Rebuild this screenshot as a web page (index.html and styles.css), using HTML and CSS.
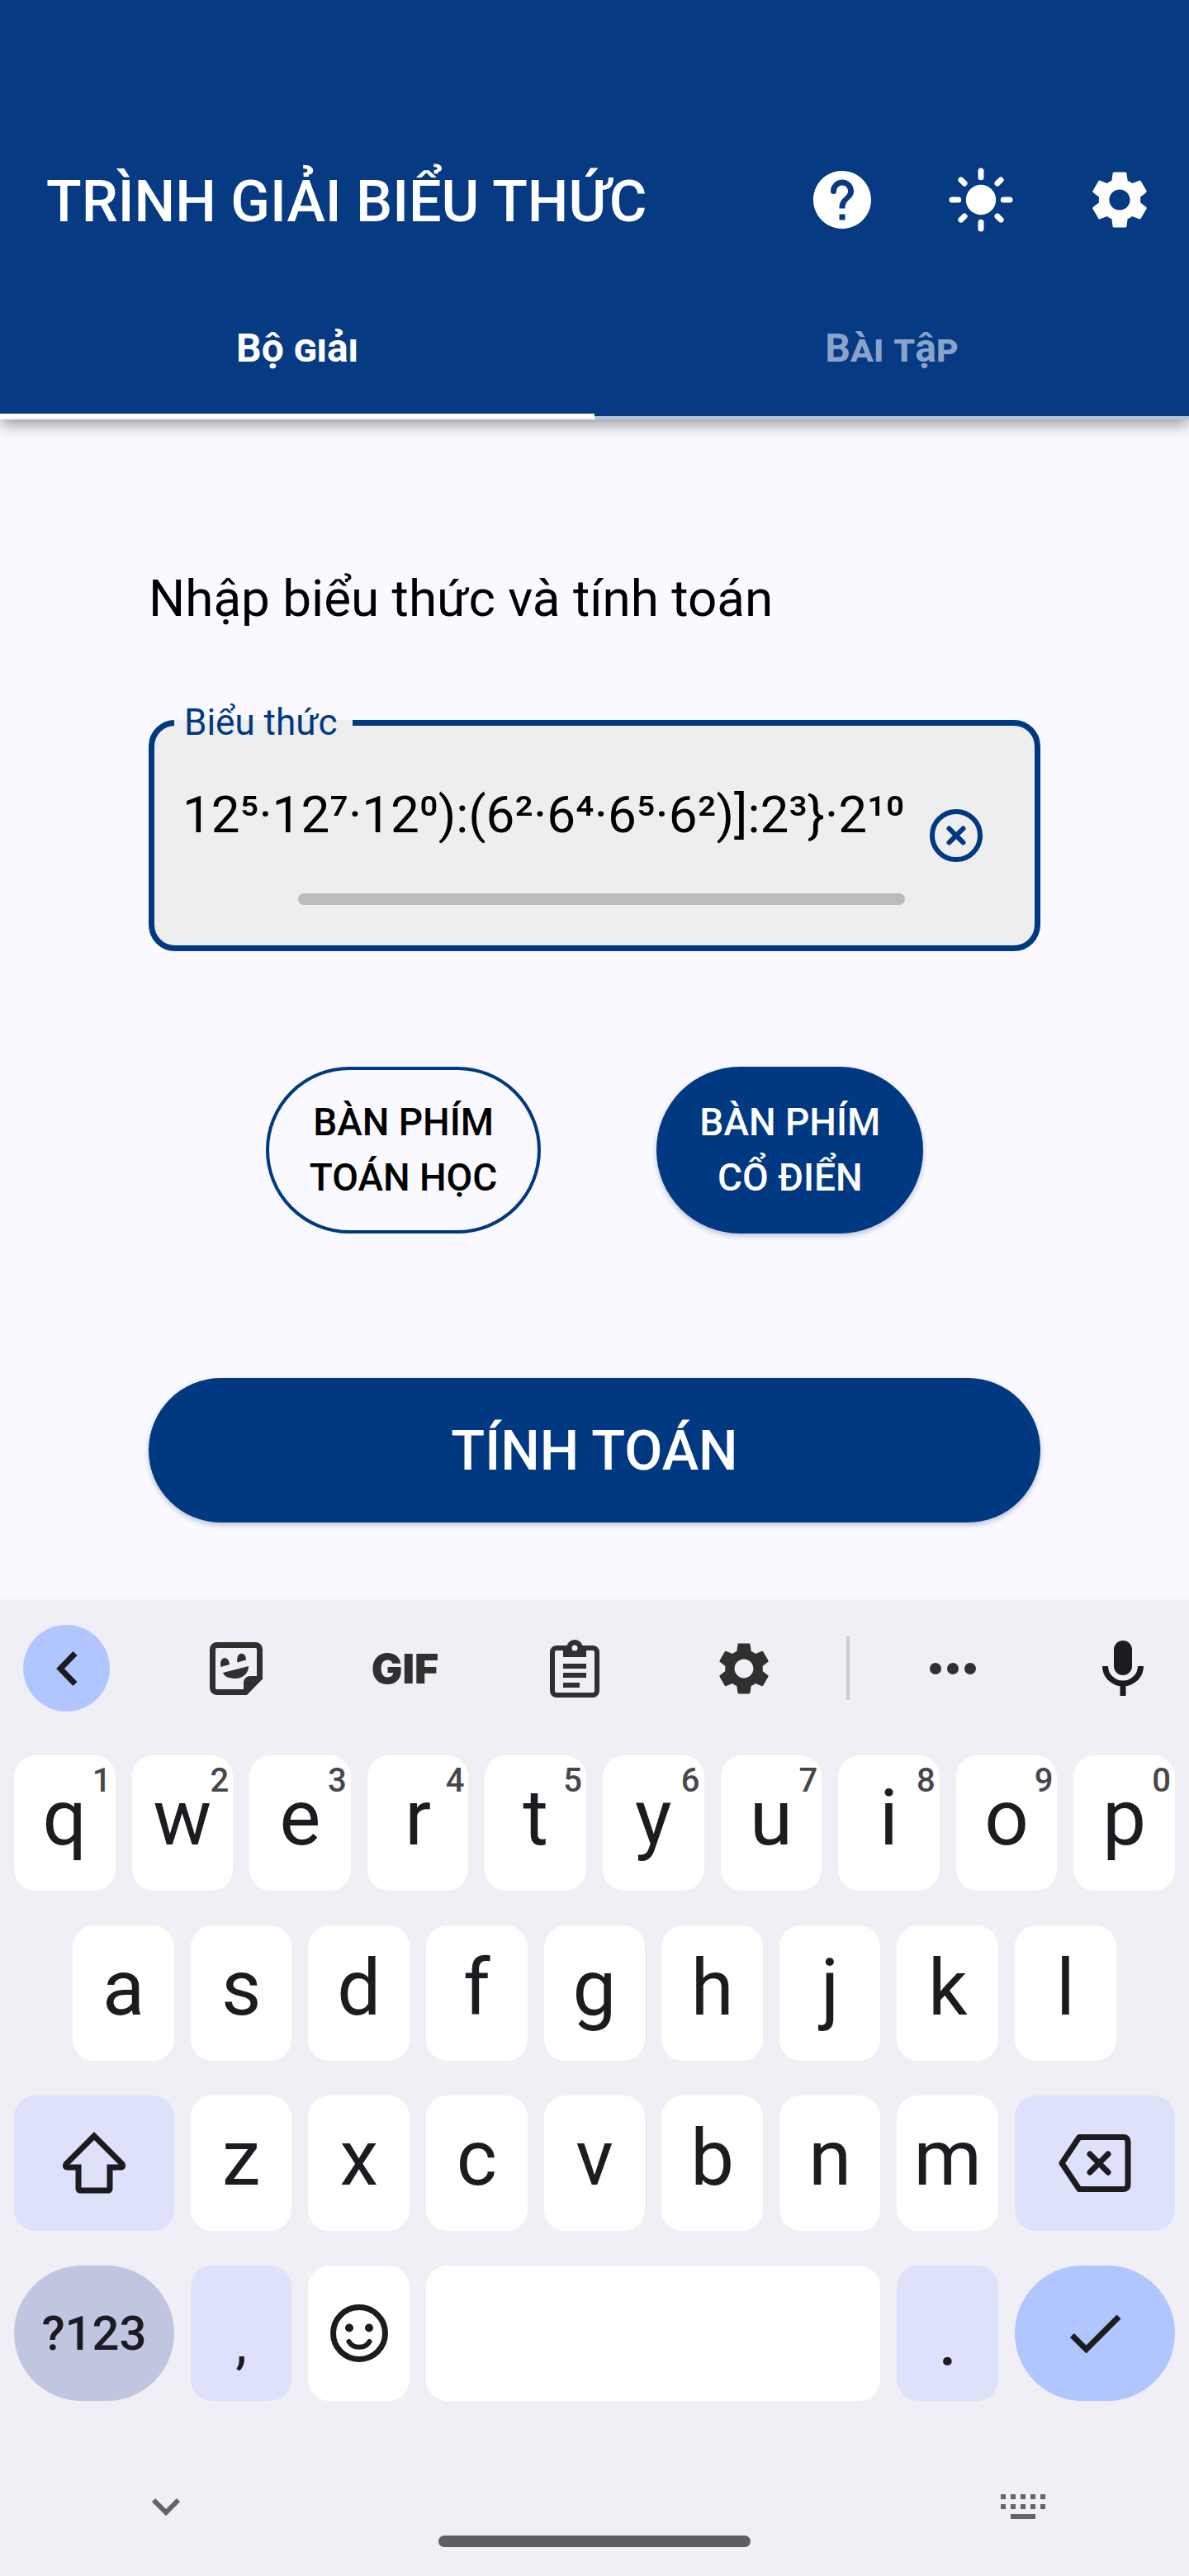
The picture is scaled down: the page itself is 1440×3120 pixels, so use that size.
FILE: index.html
```html
<!DOCTYPE html>
<html lang="vi">
<head>
  <meta charset="UTF-8" />
  <meta name="viewport" content="width=device-width, initial-scale=1.0" />
  <title>Trình giải biểu thức</title>
  <link rel="stylesheet" href="styles.css">
</head>
<body>

  <!-- App bar -->
  <header class="app-header">
    <div class="app-bar">
      <h1>TRÌNH GIẢI BIỂU THỨC</h1>
      <button class="bar-btn" aria-label="Trợ giúp">
        <svg width="84" height="84" viewBox="0 0 24 24"><path fill="#fff" d="M12 2C6.48 2 2 6.48 2 12s4.48 10 10 10 10-4.48 10-10S17.52 2 12 2zm1 17h-2v-2h2v2zm2.07-7.75l-.9.92C13.45 12.9 13 13.5 13 15h-2v-.5c0-1.1.45-2.1 1.17-2.83l1.24-1.26c.37-.36.59-.86.59-1.41 0-1.1-.9-2-2-2s-2 .9-2 2H8c0-2.21 1.79-4 4-4s4 1.79 4 4c0 .88-.36 1.68-.93 2.25z"/><circle cx="9" cy="9" r="1" fill="#063a82"/></svg>
      </button>
      <button class="bar-btn" aria-label="Giao diện">
        <svg width="84" height="84" viewBox="0 0 24 24"><circle cx="12" cy="12" r="5.2" fill="#fff"/><path stroke="#fff" stroke-width="2" stroke-linecap="round" d="M12 2v2.2M12 19.8V22M2 12h2.2M19.8 12H22M5.1 5.1l1.2 1.2M17.7 17.7l1.2 1.2M5.1 18.9l1.2-1.2M17.7 6.3l1.2-1.2"/></svg>
      </button>
      <button class="bar-btn" aria-label="Cài đặt">
        <svg width="84" height="84" viewBox="0 0 24 24"><path fill="#fff" d="M19.14 12.94c.04-.3.06-.61.06-.94 0-.32-.02-.64-.07-.94l2.03-1.58c.18-.14.23-.41.12-.61l-1.92-3.32c-.12-.22-.37-.29-.59-.22l-2.39.96c-.5-.38-1.03-.7-1.62-.94l-.36-2.54c-.04-.24-.24-.41-.48-.41h-3.84c-.24 0-.43.17-.47.41l-.36 2.54c-.59.24-1.13.57-1.62.94l-2.39-.96c-.22-.08-.47 0-.59.22L2.74 8.87c-.12.21-.08.47.12.61l2.03 1.58c-.05.3-.09.63-.09.94s.02.64.07.94l-2.03 1.58c-.18.14-.23.41-.12.61l1.92 3.32c.12.22.37.29.59.22l2.39-.96c.5.38 1.03.7 1.62.94l.36 2.54c.05.24.24.41.48.41h3.84c.24 0 .44-.17.47-.41l.36-2.54c.59-.24 1.13-.56 1.62-.94l2.39.96c.22.08.47 0 .59-.22l1.92-3.32c.12-.22.07-.47-.12-.61l-2.01-1.58zM12 15.6c-1.98 0-3.6-1.62-3.6-3.6s1.62-3.6 3.6-3.6 3.6 1.62 3.6 3.6-1.62 3.6-3.6 3.6z"/></svg>
      </button>
    </div>
    <nav class="tabs">
      <button class="tab active">Bộ giải</button>
      <button class="tab">Bài tập</button>
    </nav>
  </header>

  <!-- Solver form -->
  <main class="solver">
    <h2>Nhập biểu thức và tính toán</h2>
    <fieldset class="field">
      <legend><label for="expression">Biểu thức</label></legend>
      <div class="field-row">
        <div class="field-text">
          <input type="text" id="expression" value="12⁵·12⁷·12⁰):(6²·6⁴·6⁵·6²)]:2³}·2¹⁰">
          <div class="scroll-track"><div class="scroll-thumb"></div></div>
        </div>
        <button class="clear-btn" aria-label="Xóa">
          <svg width="64" height="64" viewBox="0 0 64 64" fill="none" stroke="#003882" stroke-linecap="round"><circle cx="32" cy="32" r="29" stroke-width="6"/><path stroke-width="6" d="M23.500 23.500l17 17M40.500 23.500l-17 17"/></svg>
        </button>
      </div>
    </fieldset>
    <div class="keyboard-choice">
      <button class="pill outline">BÀN PHÍM<br>TOÁN HỌC</button>
      <button class="pill filled">BÀN PHÍM<br>CỔ ĐIỂN</button>
    </div>
    <button class="solve-btn">TÍNH TOÁN</button>
  </main>

  <!-- On-screen keyboard -->
  <section class="keyboard">
    <div class="toolbar">
      <button class="tool back" aria-label="Quay lại">
        <svg width="26" height="42" viewBox="0 0 26 42"><path fill="none" stroke="#1b1b20" stroke-width="7" d="M23 2.500L5 21l18 18.500"/></svg>
      </button>
      <button class="tool" aria-label="Nhãn dán">
        <svg width="66" height="66" viewBox="0 0 66 66"><path fill="none" stroke="#303030" stroke-width="7" d="M9.500 4.500h47a5 5 0 0 1 5 5V44L44.500 61.500h-35a5 5 0 0 1-5-5v-47a5 5 0 0 1 5-5z"/><path fill="#303030" d="M42 62V50a8 8 0 0 1 8-8h13v3L45 63zM17 38l31-8c0 8-6 15-16 15-7 0-13-2-15-7zM14.500 31c-1.500-6 .5-10 4-11 3.500 0 6.500 3 6.500 8zM34.500 25.500c-1-5.500.5-9.500 3.500-10.500 4-1 7 2 7 7.500z"/></svg>
      </button>
      <button class="tool gif">GIF</button>
      <button class="tool" aria-label="Bảng nhớ tạm">
        <svg width="60" height="70" viewBox="0 0 60 70"><rect x="3" y="10" width="54" height="57" rx="5" fill="none" stroke="#303030" stroke-width="6"/><circle cx="30" cy="10" r="10" fill="#303030"/><path fill="#303030" d="M16 8h28v13H16zM16 29h28v6H16zM16 40h28v6H16zM16 52h20v6H16z"/><circle cx="30" cy="10" r="3.500" fill="#f0eff6"/></svg>
      </button>
      <button class="tool" aria-label="Cài đặt bàn phím">
        <svg width="76" height="76" viewBox="0 0 24 24"><path fill="#303030" d="M19.140 12.940c.04-.3.06-.61.06-.94 0-.32-.02-.64-.07-.94l2.030-1.580c.18-.14.23-.41.12-.61l-1.920-3.320c-.12-.22-.37-.29-.59-.22l-2.390.96c-.5-.38-1.030-.7-1.620-.94l-.36-2.540c-.04-.24-.24-.41-.48-.41h-3.840c-.24 0-.43.17-.47.41l-.36 2.540c-.59.24-1.130.57-1.620.94l-2.390-.96c-.22-.08-.47 0-.59.22L2.740 8.870c-.12.21-.08.47.12.61l2.030 1.580c-.05.3-.09.63-.09.94s.02.64.07.94l-2.030 1.580c-.18.14-.23.41-.12.61l1.920 3.320c.12.22.37.29.59.22l2.390-.96c.5.38 1.030.7 1.620.94l.36 2.540c.05.24.24.41.48.41h3.840c.24 0 .44-.17.47-.41l.36-2.540c.59-.24 1.130-.56 1.620-.94l2.390.96c.22.08.47 0 .59-.22l1.920-3.320c.12-.22.07-.47-.12-.61l-2.010-1.580zM12 15.600c-1.980 0-3.600-1.620-3.600-3.600s1.620-3.600 3.600-3.600 3.600 1.620 3.600 3.600-1.620 3.600-3.600 3.600z"/></svg>
      </button>
      <span class="divider"></span>
      <button class="tool" aria-label="Thêm">
        <svg width="56" height="14" viewBox="0 0 56 14" fill="#303030"><circle cx="7" cy="7" r="7"/><circle cx="28" cy="7" r="7"/><circle cx="49" cy="7" r="7"/></svg>
      </button>
      <button class="tool mic" aria-label="Giọng nói">
        <svg width="50" height="68" viewBox="0 0 50 68"><rect x="14" width="22" height="42" rx="11" fill="#1b1b20"/><path fill="none" stroke="#1b1b20" stroke-width="7" d="M3.500 31a21.500 21 0 0 0 43 0M25 52v15"/></svg>
      </button>
    </div>

    <div class="keys">
      <button class="key">q<span class="hint">1</span></button>
      <button class="key">w<span class="hint">2</span></button>
      <button class="key">e<span class="hint">3</span></button>
      <button class="key">r<span class="hint">4</span></button>
      <button class="key">t<span class="hint">5</span></button>
      <button class="key">y<span class="hint">6</span></button>
      <button class="key">u<span class="hint">7</span></button>
      <button class="key">i<span class="hint">8</span></button>
      <button class="key">o<span class="hint">9</span></button>
      <button class="key">p<span class="hint">0</span></button>

      <button class="key indent">a</button>
      <button class="key">s</button>
      <button class="key">d</button>
      <button class="key">f</button>
      <button class="key">g</button>
      <button class="key">h</button>
      <button class="key">j</button>
      <button class="key">k</button>
      <button class="key">l</button>

      <button class="key wide soft row-start" aria-label="Shift">
        <svg width="78" height="76" viewBox="0 0 78 76"><path fill="none" stroke="#1b1b20" stroke-width="7" d="M39 5l34 34q2 4-2 4H58v26a2 2 0 0 1-2 2H22a2 2 0 0 1-2-2V43H7q-4 0-2-4z"/></svg>
      </button>
      <button class="key">z</button>
      <button class="key">x</button>
      <button class="key">c</button>
      <button class="key">v</button>
      <button class="key">b</button>
      <button class="key">n</button>
      <button class="key">m</button>
      <button class="key wide soft" aria-label="Xóa lùi">
        <svg width="88" height="70" viewBox="0 0 88 70"><path fill="none" stroke="#1b1b20" stroke-width="7" stroke-linecap="round" stroke-linejoin="round" d="M25 3.500h54a5 5 0 0 1 5 5v53a5 5 0 0 1-5 5H25L4 35zM38 24l22 22M60 24L38 46"/></svg>
      </button>

      <button class="key wide symbols">?123</button>
      <button class="key soft comma">,</button>
      <button class="key" aria-label="Biểu tượng cảm xúc">
        <svg width="70" height="70" viewBox="0 0 70 70"><g fill="none" stroke="#1b1b20" stroke-width="7"><circle cx="35" cy="35" r="31.500"/><path stroke-width="6" stroke-linecap="round" d="M22.500 45c5 9 20 9 25 0"/></g><circle cx="23" cy="28.500" r="5" fill="#1b1b20"/><circle cx="47" cy="28.500" r="5" fill="#1b1b20"/></svg>
      </button>
      <button class="key space" aria-label="Dấu cách"></button>
      <button class="key soft period">.</button>
      <button class="key wide enter" aria-label="Xong">
        <svg width="84" height="84" viewBox="0 0 24 24"><path fill="#1b1b20" d="M9 16.170L4.830 12l-1.420 1.410L9 19 21 7l-1.410-1.410z"/></svg>
      </button>
    </div>

    <div class="nav-bar">
      <button class="nav-btn" aria-label="Ẩn bàn phím">
        <svg width="34" height="22" viewBox="0 0 34 22"><path fill="none" stroke="#646466" stroke-width="6" d="M2 3l15 15L32 3"/></svg>
      </button>
      <span class="home-bar"></span>
      <button class="nav-btn" aria-label="Đổi bàn phím">
        <svg width="54" height="30" viewBox="0 0 54 30"><path fill="#646466" d="M0 0h6v6H0zM12 0h6v6h-6zM24 0h6v6h-6zM36 0h6v6h-6zM48 0h6v6h-6zM0 12h6v6H0zM12 12h6v6h-6zM24 12h6v6h-6zM36 12h6v6h-6zM48 12h6v6h-6zM12 24h30v6H12z"/></svg>
      </button>
    </div>
  </section>

  <script>
    // keep the end of a long expression in view
    const expression = document.getElementById('expression');
    expression.scrollLeft = expression.scrollWidth;
  </script>
</body>
</html>
```
FILE: styles.css
```css
* {
  box-sizing: border-box;
}

body {
  margin: 0;
  min-height: 100vh;
  display: flex;
  flex-direction: column;
  font-family: Roboto, sans-serif;
  background: #f9f9ff;
  color: #000;
}

button {
  margin: 0;
  padding: 0;
  border: none;
  background: none;
  font-family: inherit;
  color: inherit;
  cursor: pointer;
}

svg {
  display: block;
}

/* App bar */
.app-header {
  padding-top: 158px;
  background: #063a82;
  color: #fff;
  box-shadow: 0 6px 18px rgba(0, 0, 0, 0.4);
}

.app-bar {
  display: flex;
  align-items: center;
  height: 168px;
  padding-left: 56px;
}

.app-bar h1 {
  flex: 1;
  margin: 0;
  padding-top: 4px;
  font-size: 70px;
  font-weight: 500;
  line-height: 84px;
  white-space: nowrap;
}

.bar-btn {
  display: flex;
  align-items: center;
  justify-content: center;
  width: 168px;
  height: 168px;
}

.tabs {
  display: flex;
}

.tab {
  flex: 1;
  height: 182px;
  padding-top: 12px;
  border-bottom: 4px solid #b9c4d6;
  font-size: 48px;
  font-weight: 700;
  font-variant: small-caps;
  color: #8aa3cb;
}

.tab.active {
  padding-top: 15px;
  border-bottom: 7px solid #fff;
  color: #fff;
}

/* Solver form */
.solver {
  flex: 1;
  display: flex;
  flex-direction: column;
  padding: 182px 180px 93px;
}

.solver h2 {
  margin: 0 0 91px;
  font-size: 62px;
  font-weight: 400;
  line-height: 70px;
}

.field {
  margin: 0;
  padding: 51px 53px 49px 24px;
  border: 7px solid #003882;
  border-radius: 32px;
  background: #eeeeee;
}

.field legend {
  padding: 0 18px 0 12px;
  font-size: 44px;
  line-height: 49px;
  color: #003882;
}

.field-row {
  display: flex;
  gap: 20px;
  padding-left: 10px;
}

.field-text {
  flex: 1;
  min-width: 0;
}

.field-text input {
  display: block;
  width: 100%;
  height: 70px;
  padding: 0;
  border: none;
  outline: none;
  background: none;
  font-family: inherit;
  font-size: 62px;
  color: #000;
}

.scroll-track {
  display: flex;
  justify-content: flex-end;
  margin-top: 61px;
}

.scroll-thumb {
  width: 84%;
  height: 14px;
  border-radius: 7px;
  background: #bbbbbb;
}

.clear-btn {
  display: flex;
  align-items: center;
  justify-content: center;
  width: 84px;
  height: 84px;
  margin-top: 19px;
}

.keyboard-choice {
  display: flex;
  justify-content: center;
  gap: 140px;
  margin: 140px 0 175px;
}

.pill {
  padding: 34px 52px;
  border-radius: 101px;
  font-size: 46px;
  font-weight: 500;
  line-height: 67px;
}

.pill.outline {
  border: 4px solid #003882;
  padding: 30px 49px;
}

.pill.filled,
.solve-btn {
  background: #003882;
  color: #fff;
  box-shadow: 0 3px 6px rgba(0, 30, 80, 0.25);
}

.solve-btn {
  height: 175px;
  border-radius: 88px;
  font-size: 67px;
  font-weight: 500;
}

/* Keyboard */
.keyboard {
  background: #f0eff6;
  box-shadow: 0 0 8px #f0eff6;
  color: #1b1b20;
}

.toolbar {
  display: flex;
  align-items: center;
  gap: 100px;
  height: 165px;
  padding: 0 28px;
}

.tool {
  display: flex;
  align-items: center;
  justify-content: center;
  flex: none;
  width: 105px;
  height: 105px;
}

.tool.back {
  border-radius: 50%;
  background: #b1c5ff;
}

.tool.gif {
  font-family: Inter, sans-serif;
  font-size: 50px;
  font-weight: 900;
  color: #303030;
}

.tool.mic {
  margin-left: auto;
}

.divider {
  flex: none;
  width: 4px;
  height: 77px;
  margin: 0 -28px;
  background: #cdccd3;
}

.keys {
  display: grid;
  grid-template-columns: repeat(20, 1fr);
  grid-auto-rows: 164px;
  gap: 42px 20px;
  padding: 23px 17px 0;
}

.key {
  position: relative;
  grid-column: span 2;
  display: flex;
  align-items: center;
  justify-content: center;
  min-width: 0;
  padding-bottom: 12px;
  border-radius: 26px;
  background: #fff;
  font-size: 94px;
  line-height: 110px;
}

.key:has(svg) {
  padding-bottom: 0;
}

.key.indent {
  grid-column: 2 / span 2;
}

.key.wide {
  grid-column: span 3;
}

.key.row-start {
  grid-column: 1 / span 3;
}

.key.soft {
  background: #dde1f9;
}

.key.space {
  grid-column: span 8;
}

.key.symbols {
  padding: 0;
  border-radius: 82px;
  background: #c0c5e0;
  font-size: 58px;
  font-weight: 500;
}

.key.comma {
  padding: 24px 0 0;
  font-size: 70px;
}

.key.period {
  padding: 12px 0 0;
}

.key.enter {
  border-radius: 82px;
  background: #b1c5ff;
}

.hint {
  position: absolute;
  top: 11px;
  right: 5px;
  font-size: 40px;
  font-weight: 500;
  line-height: 40px;
  color: #47474a;
}

.nav-bar {
  display: flex;
  justify-content: space-between;
  padding: 86px 159px 35px;
}

.nav-btn {
  display: flex;
  align-items: center;
  justify-content: center;
  width: 84px;
  height: 84px;
}

.home-bar {
  align-self: flex-end;
  width: 378px;
  height: 14px;
  margin-top: 77px;
  border-radius: 7px;
  background: #5f5f61;
}
```
